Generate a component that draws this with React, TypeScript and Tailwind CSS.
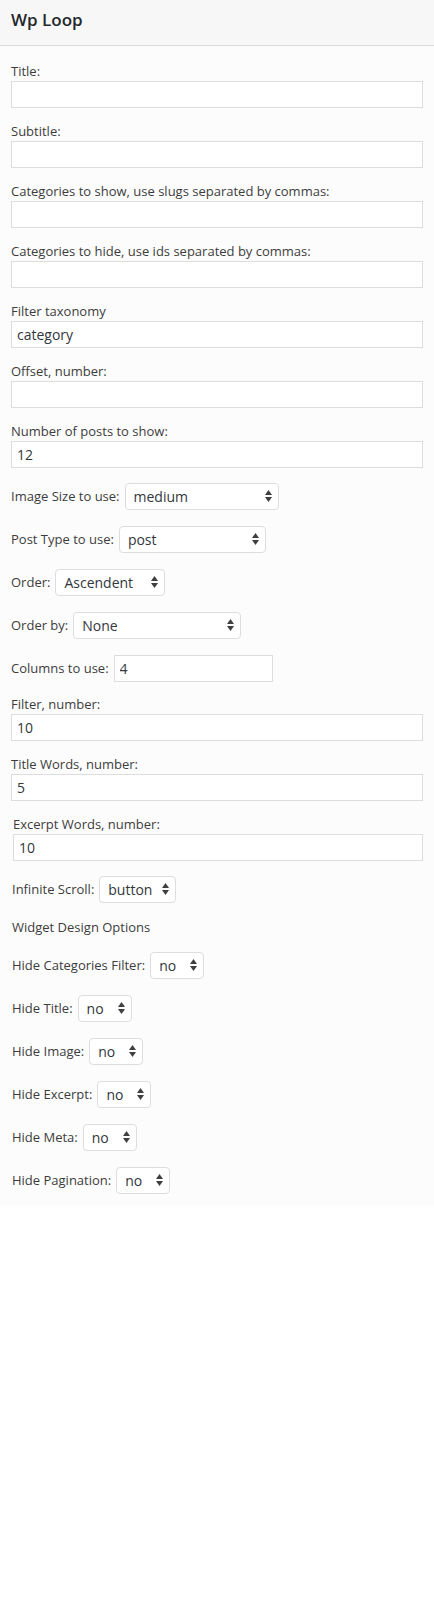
import React from 'react'

function Arrows() {
  return (
    <svg width="7" height="12" viewBox="0 0 7 12" className="absolute right-[7px] top-1/2 -translate-y-1/2 pointer-events-none">
      <path d="M0 5 L3.5 0 L7 5 Z" fill="#3f3f3f" />
      <path d="M0 7 L3.5 12 L7 7 Z" fill="#3f3f3f" />
    </svg>
  )
}

interface TextFieldProps {
  label: string
  value?: string
  className?: string
}

function TextField({ label, value = '', className = '' }: TextFieldProps) {
  return (
    <div className={className}>
      <label className="block text-[13px] leading-[20px] text-[#3c3c3c]">{label}</label>
      <input
        type="text"
        defaultValue={value}
        className="block w-full h-[27px] border border-[#dddddd] bg-white px-[5px] text-[14px] text-[#32373c] outline-none"
      />
    </div>
  )
}

interface SelectRowProps {
  label: string
  value: string
  width: string
  className?: string
}

function SelectRow({ label, value, width, className = '' }: SelectRowProps) {
  return (
    <div className={`flex items-center h-[30px] gap-[5px] ${className}`}>
      <label className="text-[13px] leading-[20px] text-[#3c3c3c] whitespace-nowrap">{label}</label>
      <div className={`relative ${width}`}>
        <select
          defaultValue={value}
          className="appearance-none block w-full h-[27px] rounded-[4px] border border-[#dddddd] bg-white pl-[8px] pr-[18px] text-[14px] text-[#32373c] outline-none"
        >
          <option value={value}>{value}</option>
        </select>
        <Arrows />
      </div>
    </div>
  )
}

export default function App() {
  return (
    <div className="min-h-[1600px] bg-white font-['Open_Sans',sans-serif]">
      <div className="bg-[#fcfcfc]">
        {/* Widget header */}
        <div className="h-[46px] bg-[#f7f7f7] border-b border-[#dddddd] px-[11px] pt-[8px]">
          <h3 className="text-[17px] leading-[23px] font-semibold text-[#23282d]">Wp Loop</h3>
        </div>

        {/* Widget form */}
        <div className="px-[11px] pt-[15px] pb-[11px] flex flex-col gap-[13px]">
          <TextField label="Title:" />
          <TextField label="Subtitle:" />
          <TextField label="Categories to show, use slugs separated by commas:" />
          <TextField label="Categories to hide, use ids separated by commas:" />
          <TextField label="Filter taxonomy" value="category" />
          <TextField label="Offset, number:" />
          <TextField label="Number of posts to show:" value="12" />

          <SelectRow label="Image Size to use:" value="medium" width="w-[154px]" />
          <SelectRow label="Post Type to use:" value="post" width="w-[147px]" />
          <SelectRow label="Order:" value="Ascendent" width="w-[110px]" />
          <SelectRow label="Order by:" value="None" width="w-[168px]" />

          <div className="flex items-center h-[30px] gap-[5px]">
            <label className="text-[13px] leading-[20px] text-[#3c3c3c] whitespace-nowrap">Columns to use:</label>
            <input
              type="text"
              defaultValue="4"
              className="block w-[159px] h-[27px] border border-[#dddddd] bg-white px-[5px] text-[14px] text-[#32373c] outline-none"
            />
          </div>

          <TextField label="Filter, number:" value="10" className="-mt-[2px]" />
          <TextField label="Title Words, number:" value="5" />
          <TextField label="Excerpt Words, number:" value="10" className="pl-[2px]" />

          <SelectRow label="Infinite Scroll:" value="button" width="w-[77px]" className="pl-px" />

          <p className="pl-px text-[13px] leading-[20px] text-[#3c3c3c]">Widget Design Options</p>

          <SelectRow label="Hide Categories Filter:" value="no" width="w-[54px]" className="pl-px" />
          <SelectRow label="Hide Title:" value="no" width="w-[54px]" className="pl-px" />
          <SelectRow label="Hide Image:" value="no" width="w-[54px]" className="pl-px" />
          <SelectRow label="Hide Excerpt:" value="no" width="w-[54px]" className="pl-px" />
          <SelectRow label="Hide Meta:" value="no" width="w-[54px]" className="pl-px" />
          <SelectRow label="Hide Pagination:" value="no" width="w-[54px]" className="pl-px" />
        </div>
      </div>
    </div>
  )
}
